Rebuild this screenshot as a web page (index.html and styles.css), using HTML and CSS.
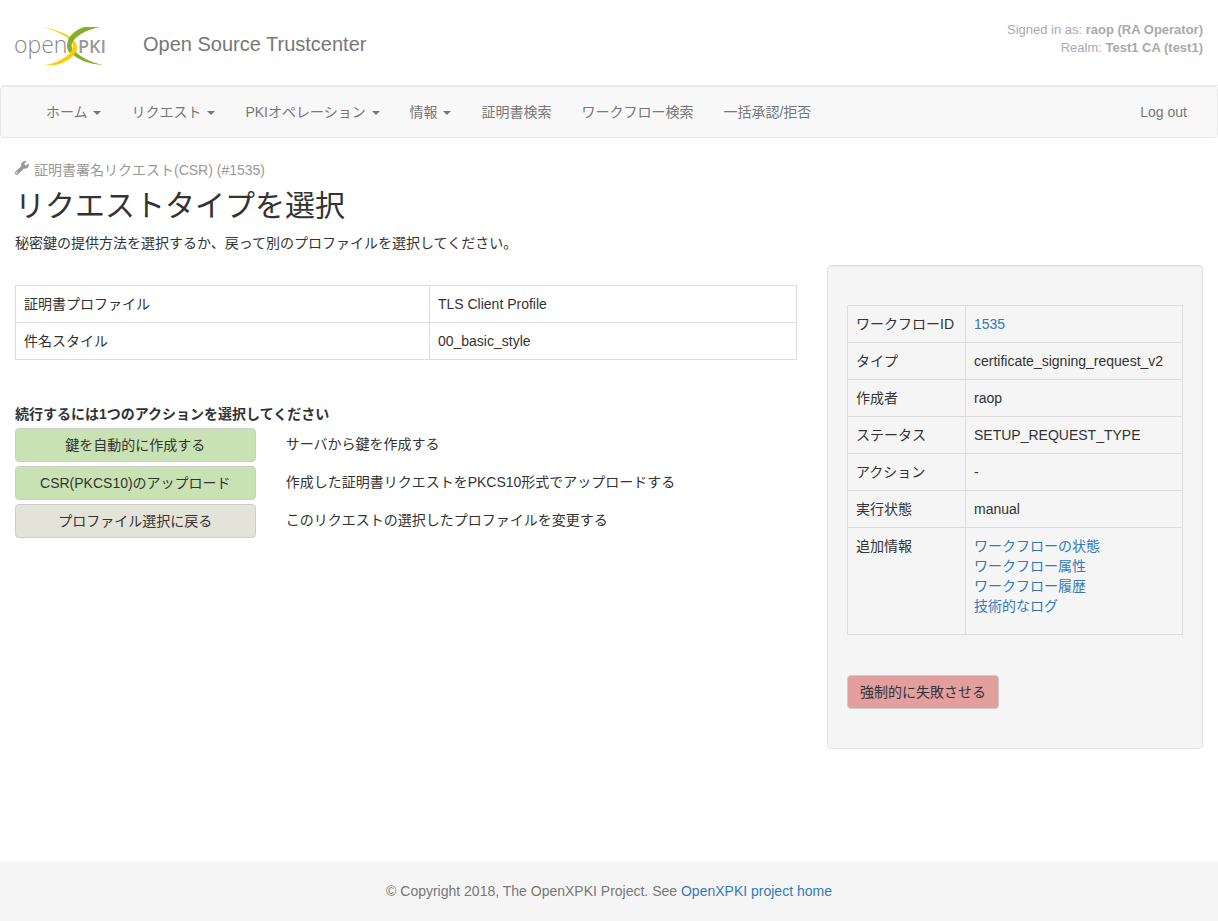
FILE: index.html
```html
<!DOCTYPE html>
<html lang="ja">
<head>
<meta charset="utf-8">
<meta name="viewport" content="width=device-width, initial-scale=1">
<title>OpenXPKI - Open Source Trustcenter</title>
<link rel="stylesheet" href="styles.css">
</head>
<body>
<header class="site-header">
  <svg class="logo" viewBox="0 0 94 42" role="img" aria-label="OpenXPKI">
    <text class="logo-open" x="-1" y="28">open</text>
    <text class="logo-pki" x="63" y="28">PKI</text>
    <path fill="#86ae2c" d="M55 27C62 35 74 39 88 40C75 37 65 32 59 25Z"/>
    <path fill="#86ae2c" d="M84 2H70C60 5 52 13 52 21C52 24 53 26 55 28L58 25C57 23 56 21 57 18C59 11 71 5 84 2Z"/>
    <path fill="#fdcb07" d="M27 2C42 6 52 11 56 16C59 20 58 25 54 29C48 35 38 39 29 40H41C50 38 62 31 62 22C62 18 59 15 55 12C48 7 38 4 27 2Z"/>
    <path fill="#86ae2c" d="M84 2H70C62 4 56 9 53 15L57 18C60 11 71 5 84 2Z"/>
  </svg>
  <div class="site-title">Open Source Trustcenter</div>
  <div class="session">
    <div>Signed in as: <strong>raop (RA Operator)</strong></div>
    <div>Realm: <strong>Test1 CA (test1)</strong></div>
  </div>
</header>

<nav class="navbar">
  <ul class="menu">
    <li><button type="button" class="menu-item">ホーム <span class="caret"></span></button></li>
    <li><button type="button" class="menu-item">リクエスト <span class="caret"></span></button></li>
    <li><button type="button" class="menu-item">PKIオペレーション <span class="caret"></span></button></li>
    <li><button type="button" class="menu-item">情報 <span class="caret"></span></button></li>
    <li><a class="menu-item" href="#">証明書検索</a></li>
    <li><a class="menu-item" href="#">ワークフロー検索</a></li>
    <li><a class="menu-item" href="#">一括承認/拒否</a></li>
  </ul>
  <a class="menu-item" href="#">Log out</a>
</nav>

<main class="content">
  <div class="breadcrumb">
    <svg class="wrench" viewBox="0 0 14 14" aria-hidden="true"><path fill="currentColor" d="M13.600 2.200L11.300 4.400L9.800 4L9.400 2.500L11.700.3C10.100-.2 8.300.1 7.100 1.300C6.100 2.300 5.800 3.800 6.200 5.200L.5 10.500C-.2 11.200-.2 12.500.5 13.200C1.200 13.900 2.500 13.900 3.200 13.200L8.700 7.700C10.100 8.100 11.600 7.700 12.700 6.700C13.900 5.500 14.200 3.700 13.600 2.200ZM2.300 12.300A.7.7 0 1 1 1.300 11.300A.7.7 0 0 1 2.300 12.300Z"/></svg>
    証明書署名リクエスト(CSR) (#1535)
  </div>
  <h1 class="page-title">リクエストタイプを選択</h1>
  <p class="lead">秘密鍵の提供方法を選択するか、戻って別のプロファイルを選択してください。</p>

  <div class="columns">
    <section class="main-column">
      <table class="data-table summary">
        <tr><th scope="row">証明書プロファイル</th><td>TLS Client Profile</td></tr>
        <tr><th scope="row">件名スタイル</th><td>00_basic_style</td></tr>
      </table>
      <h2 class="actions-title">続行するには1つのアクションを選択してください</h2>
      <div class="actions">
        <div class="action">
          <div class="action-button"><button type="button" class="btn btn-go">鍵を自動的に作成する</button></div>
          <p class="action-text">サーバから鍵を作成する</p>
        </div>
        <div class="action">
          <div class="action-button"><button type="button" class="btn btn-go">CSR(PKCS10)のアップロード</button></div>
          <p class="action-text">作成した証明書リクエストをPKCS10形式でアップロードする</p>
        </div>
        <div class="action">
          <div class="action-button"><button type="button" class="btn btn-back">プロファイル選択に戻る</button></div>
          <p class="action-text">このリクエストの選択したプロファイルを変更する</p>
        </div>
      </div>
    </section>

    <aside class="side-column">
      <div class="well">
        <table class="data-table details">
          <tr><th scope="row">ワークフローID</th><td><a href="#">1535</a></td></tr>
          <tr><th scope="row">タイプ</th><td>certificate_signing_request_v2</td></tr>
          <tr><th scope="row">作成者</th><td>raop</td></tr>
          <tr><th scope="row">ステータス</th><td>SETUP_REQUEST_TYPE</td></tr>
          <tr><th scope="row">アクション</th><td>-</td></tr>
          <tr><th scope="row">実行状態</th><td>manual</td></tr>
          <tr><th scope="row">追加情報</th><td>
            <ul class="links">
              <li><a href="#">ワークフローの状態</a></li>
              <li><a href="#">ワークフロー属性</a></li>
              <li><a href="#">ワークフロー履歴</a></li>
              <li><a href="#">技術的なログ</a></li>
            </ul>
          </td></tr>
        </table>
        <button type="button" class="btn btn-fail">強制的に失敗させる</button>
      </div>
    </aside>
  </div>
</main>

<footer class="footer">© Copyright 2018, The OpenXPKI Project. See <a href="#">OpenXPKI project home</a></footer>
</body>
</html>
```

FILE: styles.css
```css
* { box-sizing: border-box; }

body {
  margin: 0;
  min-height: 100vh;
  display: flex;
  flex-direction: column;
  background: #fff;
  color: #333;
  font-family: "Liberation Sans", "Noto Sans CJK JP", sans-serif;
  font-size: 14px;
  line-height: 20px;
}

a { color: #337ab7; text-decoration: none; }
a:hover { text-decoration: underline; }
ul { list-style: none; margin: 0; padding: 0; }
button { font: inherit; cursor: pointer; }

.site-header {
  display: flex;
  align-items: flex-start;
  min-height: 86px;
  padding: 21px 15px 0;
  border-bottom: 1px solid #eee;
}
.logo { width: 94px; height: 42px; margin-top: 4px; flex: none; }
.logo-open { font-family: "Open Sans", sans-serif; font-size: 23px; font-weight: 300; fill: #888; }
.logo-pki { font-family: "Open Sans", sans-serif; font-size: 18px; font-weight: 600; fill: #999; }
.site-title {
  margin: 11px 0 0 34px;
  color: #777;
  font-size: 20px;
  line-height: 24px;
}
.session {
  margin-left: auto;
  color: #aaa;
  font-size: 13px;
  line-height: 18px;
  text-align: right;
}

.navbar {
  display: flex;
  justify-content: space-between;
  padding: 0 15px 0 30px;
  background: #f8f8f8;
  border: 1px solid #e7e7e7;
  border-radius: 4px;
}
.menu { display: flex; flex-wrap: wrap; }
.menu-item {
  display: block;
  padding: 15px;
  border: 0;
  background: none;
  color: #777;
  line-height: 20px;
}
.caret {
  display: inline-block;
  margin-left: 2px;
  vertical-align: middle;
  border-top: 4px solid;
  border-right: 4px solid transparent;
  border-left: 4px solid transparent;
}

.content { flex: 1; padding: 22px 15px 40px; }
.breadcrumb { display: flex; gap: 5px; color: #999; }
.wrench { width: 14px; height: 14px; margin-top: 1px; }
.page-title {
  margin: 8px 0 0;
  font-size: 30px;
  font-weight: 400;
  line-height: 36px;
}
.lead { margin: 9px 0 0; }

.columns { display: flex; margin: 0 -15px; padding-top: 12px; }
.main-column { flex: 0 0 66.6667%; padding: 20px 15px 0; }
.side-column { flex: 1; min-width: 0; padding: 0 15px; }

.data-table { width: 100%; border-collapse: collapse; }
.data-table th,
.data-table td {
  padding: 8px;
  border: 1px solid #ddd;
  font-weight: 400;
  text-align: left;
  vertical-align: top;
}
.summary th { width: 53%; }
.details th { width: 118px; white-space: nowrap; }
.links { padding-bottom: 10px; }

.actions-title { margin: 44px 0 4px; font-size: 14px; line-height: 20px; }
.actions { display: grid; gap: 4px; }
.action { display: flex; margin: 0 -15px; }
.action-button { flex: 0 0 33.3333%; padding: 0 15px; }
.action-button .btn { width: 100%; }
.action-text { flex: 1; margin: 0; padding: 6px 15px; }

.btn {
  padding: 6px 12px;
  border: 1px solid #ccc;
  border-radius: 4px;
  color: #333;
  line-height: 20px;
}
.btn-go { background: #c8e2b3; }
.btn-back { background: #e3e3da; }
.btn-fail { margin: 40px 0 20px; background: #e39e9e; }

.well {
  padding: 39px 19px 19px;
  background: #f5f5f5;
  border: 1px solid #e3e3e3;
  border-radius: 4px;
  box-shadow: inset 0 1px 1px rgba(0, 0, 0, 0.05);
}

.footer {
  padding: 20px 15px;
  background: #f5f5f5;
  color: #777;
  text-align: center;
}
```
